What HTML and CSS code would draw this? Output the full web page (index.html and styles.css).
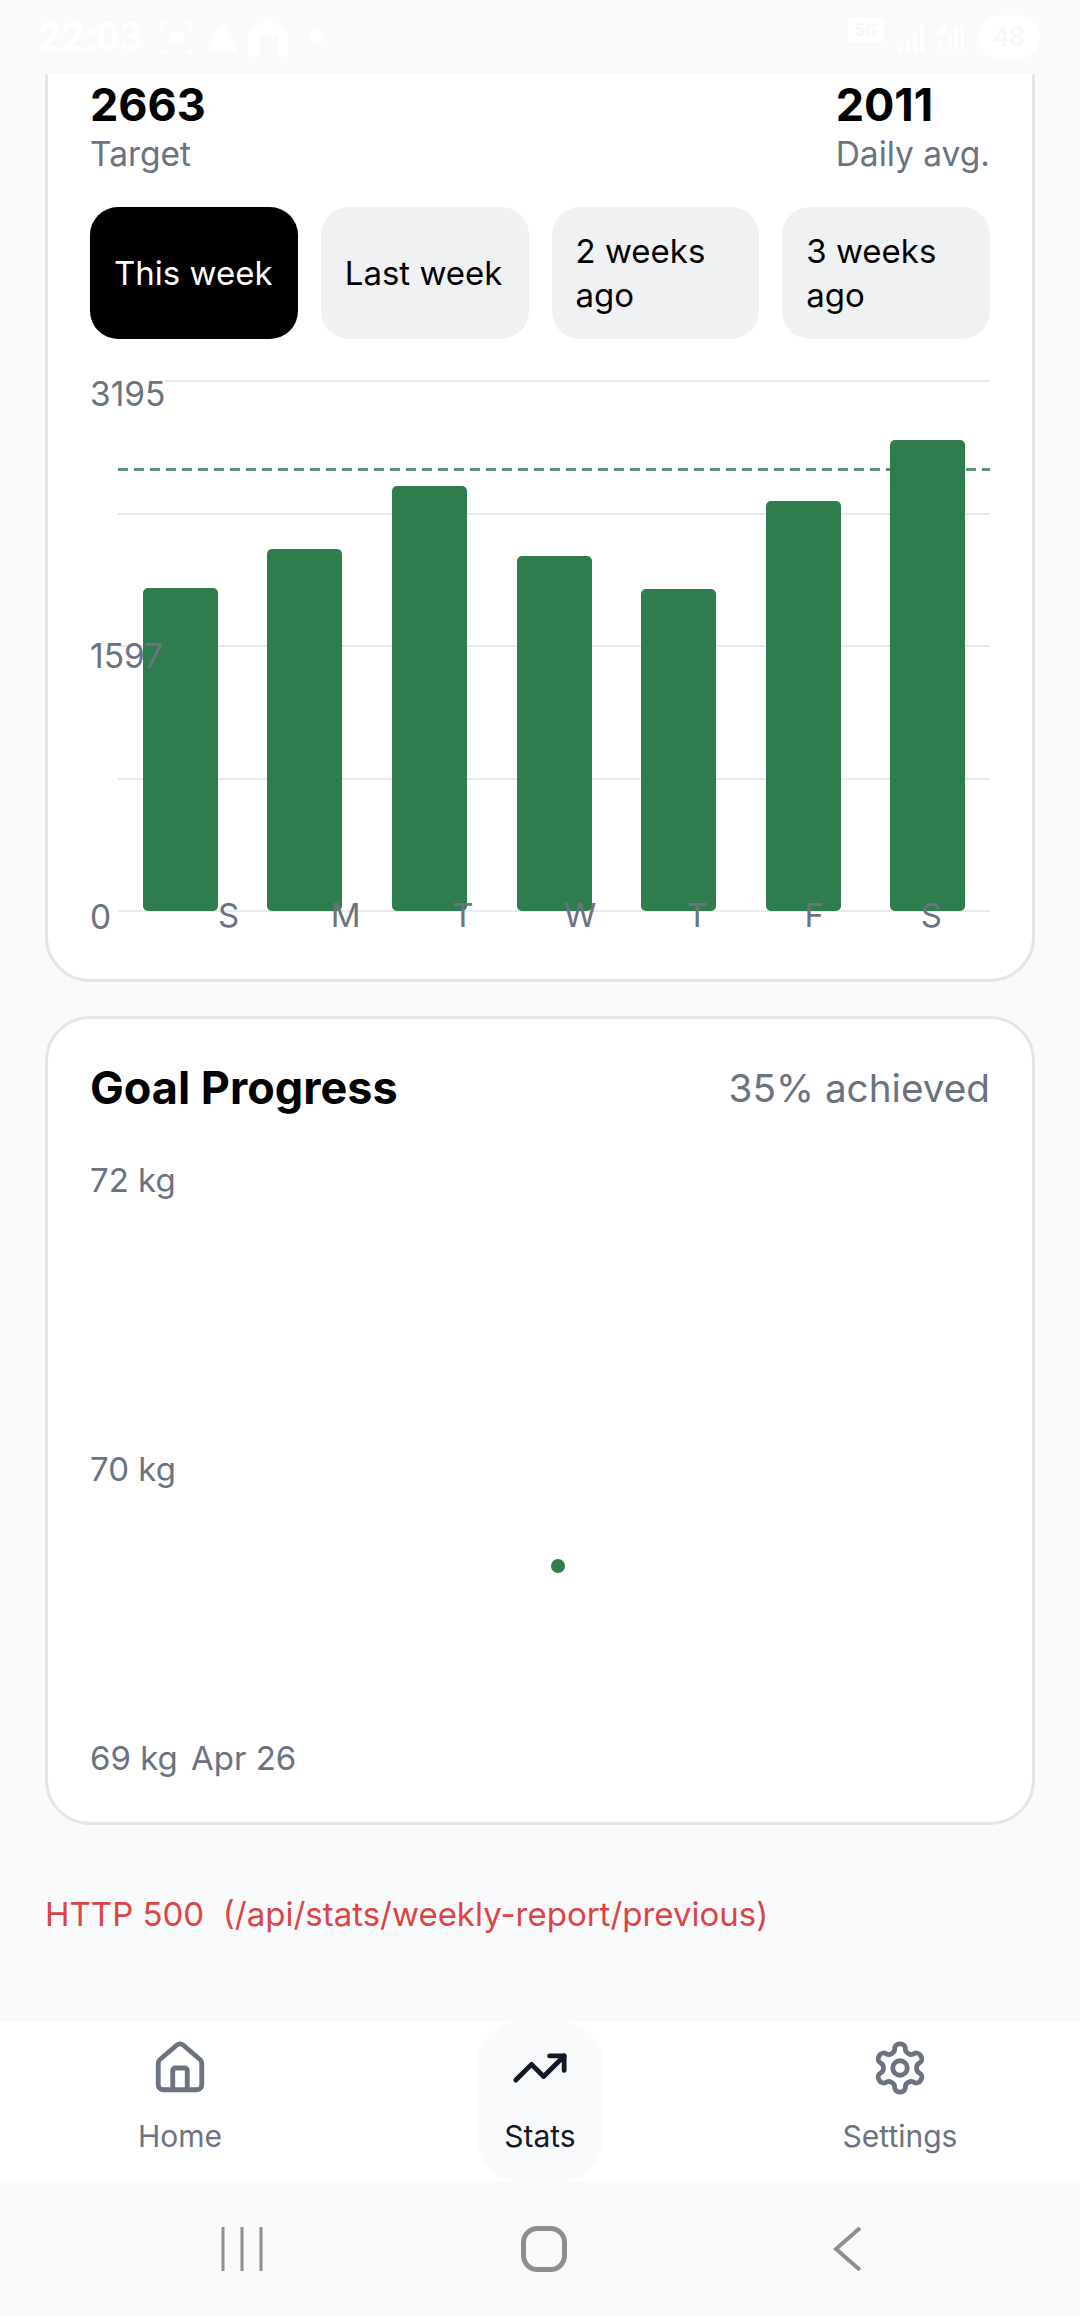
FILE: index.html
```html
<!DOCTYPE html>
<html lang="en">
<head>
<meta charset="utf-8">
<title>Stats</title>
<link rel="stylesheet" href="styles.css">
</head>
<body>
<div class="phone">
  <header class="status">
    <div class="status-side">
      <span class="time">22:03</span>
      <svg class="st-box" viewBox="0 0 33 33"><path d="M2 8V2h6M25 2h6v6M31 25v6h-6M8 31H2v-6" fill="none" stroke="#fff" stroke-width="2.5"/><rect x="9" y="11" width="15" height="11" fill="#fff"/></svg>
      <svg class="st-tri" viewBox="0 0 32 29"><path d="M16 0 32 29H0z" fill="#fff"/></svg>
      <svg class="st-home" viewBox="0 0 40 40"><path d="M20 0 40 16V40H30V18H12V40H0V16z" fill="#fff"/></svg>
      <span class="st-dot"></span>
    </div>
    <div class="status-side">
      <span class="st-5g">5G</span>
      <svg class="st-sig" viewBox="0 0 26 30"><path d="M1 24h4v6H1zM8 18h4v12H8zM15 11h4v19h-4zM22 2h4v28h-4z" fill="#fff"/></svg>
      <svg class="st-sig" viewBox="0 0 30 30"><path d="M1 2h8v10H1zM1 24h4v6H1zM12 12h4v18h-4zM19 6h4v24h-4zM26 2h4v28h-4z" fill="#fff"/></svg>
      <span class="st-batt">48</span>
    </div>
  </header>

  <main class="scroll">
    <section class="card card-week">
      <div class="stats">
        <div>
          <div class="stat-num">2663</div>
          <div class="stat-label">Target</div>
        </div>
        <div>
          <div class="stat-num">2011</div>
          <div class="stat-label">Daily avg.</div>
        </div>
      </div>
      <div class="tabs">
        <button class="tab tab-on">This week</button>
        <button class="tab">Last week</button>
        <button class="tab">2 weeks ago</button>
        <button class="tab">3 weeks ago</button>
      </div>
      <div class="chart">
        <div class="grid"><i></i><i></i><i></i><i></i><i></i></div>
        <div class="target-line"></div>
        <div class="bars">
          <div class="bar-cell"><div class="bar" style="height:323px"></div></div>
          <div class="bar-cell"><div class="bar" style="height:362px"></div></div>
          <div class="bar-cell"><div class="bar" style="height:425px"></div></div>
          <div class="bar-cell"><div class="bar" style="height:355px"></div></div>
          <div class="bar-cell"><div class="bar" style="height:322px"></div></div>
          <div class="bar-cell"><div class="bar" style="height:410px"></div></div>
          <div class="bar-cell"><div class="bar" style="height:471px"></div></div>
        </div>
        <div class="y-axis"><span>3195</span><span>1597</span><span>0</span></div>
        <div class="x-axis"><span>S</span><span>M</span><span>T</span><span>W</span><span>T</span><span>F</span><span>S</span></div>
      </div>
    </section>

    <section class="card card-goal">
      <div class="goal-head">
        <h2 class="goal-title">Goal Progress</h2>
        <span class="goal-pct">35% achieved</span>
      </div>
      <div class="goal-chart">
        <div class="goal-y"><span>72 kg</span><span>70 kg</span><span>69 kg</span></div>
        <span class="goal-date">Apr 26</span>
        <span class="goal-dot"></span>
      </div>
    </section>

    <p class="error">HTTP 500  (/api/stats/weekly-report/previous)</p>
  </main>

  <nav class="tabbar">
    <a class="nav-item">
      <svg class="nav-icon" viewBox="0 0 24 24"><path d="M15 21v-8a1 1 0 0 0-1-1h-4a1 1 0 0 0-1 1v8"/><path d="M3 10a2 2 0 0 1 .709-1.528l7-5.999a2 2 0 0 1 2.582 0l7 5.999A2 2 0 0 1 21 10v9a2 2 0 0 1-2 2H5a2 2 0 0 1-2-2z"/></svg>
      <span>Home</span>
    </a>
    <a class="nav-item nav-on">
      <svg class="nav-icon" viewBox="0 0 24 24"><path d="M16 7h6v6"/><path d="m22 7-8.5 8.5-5-5L2 17"/></svg>
      <span>Stats</span>
    </a>
    <a class="nav-item">
      <svg class="nav-icon" viewBox="0 0 24 24"><path d="M12.22 2h-.44a2 2 0 0 0-2 2v.18a2 2 0 0 1-1 1.73l-.43.25a2 2 0 0 1-2 0l-.15-.08a2 2 0 0 0-2.73.73l-.22.38a2 2 0 0 0 .73 2.73l.15.1a2 2 0 0 1 1 1.72v.51a2 2 0 0 1-1 1.74l-.15.09a2 2 0 0 0-.73 2.73l.22.38a2 2 0 0 0 2.73.73l.15-.08a2 2 0 0 1 2 0l.43.25a2 2 0 0 1 1 1.73V20a2 2 0 0 0 2 2h.44a2 2 0 0 0 2-2v-.18a2 2 0 0 1 1-1.73l.43-.25a2 2 0 0 1 2 0l.15.08a2 2 0 0 0 2.73-.73l.22-.39a2 2 0 0 0-.73-2.73l-.15-.08a2 2 0 0 1-1-1.74v-.5a2 2 0 0 1 1-1.74l.15-.09a2 2 0 0 0 .73-2.73l-.22-.38a2 2 0 0 0-2.73-.73l-.15.08a2 2 0 0 1-2 0l-.43-.25a2 2 0 0 1-1-1.73V4a2 2 0 0 0-2-2z"/><circle cx="12" cy="12" r="3"/></svg>
      <span>Settings</span>
    </a>
  </nav>

  <footer class="sysnav">
    <svg class="sys-recent" viewBox="0 0 42 44"><path d="M2 0v44M21 0v44M40 0v44"/></svg>
    <svg class="sys-home" viewBox="0 0 46 46"><rect x="2.5" y="2.5" width="41" height="41" rx="14"/></svg>
    <svg class="sys-back" viewBox="0 0 28 44"><path d="M27 1 3 22l24 21"/></svg>
  </footer>
</div>
</body>
</html>
```
FILE: styles.css
```css
* { box-sizing: border-box; }
html, body { margin: 0; padding: 0; }
body {
  background: #f9fafb;
  font-family: Inter, "Noto Sans", sans-serif;
  color: #000;
}
.phone {
  width: 1080px;
  height: 2316px;
  display: flex;
  flex-direction: column;
  overflow: hidden;
}

/* status bar */
.status {
  height: 74px;
  flex: none;
  display: flex;
  justify-content: space-between;
  align-items: center;
  padding: 0 40px 0 38px;
  background: #f9fafb;
  position: relative;
  z-index: 2;
}
.status-side { display: flex; align-items: center; gap: 14px; }
.time { color: #fff; font: 600 41px/1 Roboto, sans-serif; width: 104px; }
.st-box { width: 33px; height: 33px; margin-left: 4px; }
.st-tri { width: 32px; height: 29px; margin-left: -1px; }
.st-home { width: 40px; height: 40px; margin-left: -4px; }
.st-dot { width: 14px; height: 14px; border-radius: 50%; background: #fff; margin-left: 8px; }
.st-5g {
  width: 36px;
  height: 24px;
  margin-bottom: 14px;
  border-radius: 3px;
  background: #fff;
  color: #f6f7f8;
  font: 700 18px/24px Roboto, sans-serif;
  text-align: center;
}
.st-sig { width: 26px; height: 30px; }
.st-batt {
  width: 62px;
  height: 44px;
  border-radius: 22px;
  background: #fff;
  color: #f6f7f8;
  font: 400 28px/44px Roboto, sans-serif;
  text-align: center;
}

/* scrolled content */
.scroll {
  flex: 1;
  min-height: 0;
  overflow: hidden;
  padding: 0 45px;
}
.card {
  background: #fff;
  border: 3px solid #e4e5e8;
  border-radius: 45px;
  padding: 0 42px 45px;
}
.card-week { margin-top: -60px; padding-top: 61px; }
.card-goal { margin-top: 34px; padding-top: 39px; padding-bottom: 44px; }

.stats { display: flex; justify-content: space-between; }
.stat-num { font-size: 45px; line-height: 54px; font-weight: 700; }
.stat-label { font-size: 33.5px; line-height: 44px; color: #6b7280; }

.tabs {
  display: grid;
  grid-template-columns: repeat(4, 1fr);
  gap: 23px;
  margin-top: 31px;
}
.tab {
  height: 132px;
  border: 0;
  border-radius: 28px;
  padding: 0 20px 0 24px;
  background: #f0f1f3;
  color: #000;
  font: 400 33px/44px Inter, sans-serif;
  text-align: left;
}
.tab-on { background: #000; color: #fff; }

.chart { position: relative; height: 554px; margin-top: 41px; }
.grid {
  position: absolute;
  left: 28px;
  right: 0;
  top: 0;
  height: 532px;
  display: flex;
  flex-direction: column;
  justify-content: space-between;
}
.grid i { display: block; height: 2px; background: #e9eaed; }
.grid i:first-child { margin-left: 47px; }
.target-line {
  position: absolute;
  left: 28px;
  right: 0;
  top: 88px;
  height: 3px;
  background: repeating-linear-gradient(90deg, #5d9273 0 10px, transparent 10px 16px);
}
.bars {
  position: absolute;
  left: 28px;
  right: 0;
  top: 0;
  height: 531px;
  display: flex;
  align-items: flex-end;
}
.bar-cell { flex: 1; display: flex; justify-content: center; align-items: flex-end; }
.bar { width: 75px; background: #2f7d4f; border-radius: 5px; }
.y-axis {
  position: absolute;
  left: 0;
  top: -6px;
  height: 563px;
  display: flex;
  flex-direction: column;
  justify-content: space-between;
  font-size: 33.5px;
  line-height: 40px;
  color: #6b7280;
}
.x-axis {
  position: absolute;
  left: 80px;
  right: 0;
  top: 515px;
  display: flex;
  font-size: 33px;
  line-height: 40px;
  color: #6b7280;
}
.x-axis span { flex: 1; text-align: center; }

.goal-head { display: flex; justify-content: space-between; align-items: center; height: 60px; }
.goal-title { margin: 0; font-size: 45px; font-weight: 700; line-height: 60px; }
.goal-pct { font-size: 38.7px; color: #6b7280; }
.goal-chart { position: relative; height: 618px; margin-top: 42px; color: #6b7280; font-size: 33px; line-height: 40px; }
.goal-y { height: 100%; display: flex; flex-direction: column; justify-content: space-between; }
.goal-date { position: absolute; left: 101px; bottom: 0; }
.goal-dot {
  position: absolute;
  left: 461px;
  top: 399px;
  width: 14px;
  height: 14px;
  border-radius: 50%;
  background: #2f7d4f;
}
.error {
  margin: 65px 0 0;
  font-size: 33px;
  line-height: 48px;
  color: #dc4444;
  white-space: pre;
}

/* bottom tabs */
.tabbar {
  height: 159px;
  flex: none;
  background: #fff;
  display: flex;
  justify-content: space-between;
  padding: 0 117px;
}
.nav-item {
  width: 126px;
  display: flex;
  flex-direction: column;
  align-items: center;
  padding-top: 17px;
  border-radius: 42px;
  color: #6b7280;
  font-size: 30px;
  line-height: 40px;
}
.nav-item span { margin-top: 19px; white-space: nowrap; }
.nav-on { background: #f9fafb; color: #111827; }
.nav-icon {
  width: 58px;
  height: 58px;
  fill: none;
  stroke: currentColor;
  stroke-width: 2;
  stroke-linecap: round;
  stroke-linejoin: round;
}

/* system navigation */
.sysnav {
  height: 135px;
  flex: none;
  background: #f9f9f9;
  position: relative;
  display: flex;
  align-items: center;
  justify-content: space-between;
  padding: 0 219px 0 221px;
}
.sysnav svg { fill: none; stroke: #8e8e8e; }
.sys-recent { width: 42px; height: 44px; stroke-width: 3; }
.sys-home { width: 46px; height: 46px; stroke-width: 5; margin-right: 8px; }
.sys-back { width: 28px; height: 44px; stroke-width: 4; }
```
